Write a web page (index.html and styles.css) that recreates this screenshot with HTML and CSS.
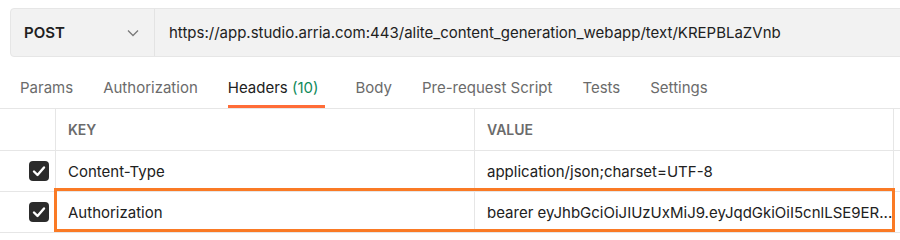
FILE: index.html
```html
<!DOCTYPE html>
<html>
<head>
<meta charset="utf-8">
<link rel="stylesheet" href="styles.css">
</head>
<body>
<div class="page">
  <div class="urlbar">
    <div class="method">
      <span class="method-name">POST</span>
      <svg class="chev" width="12" height="8" viewBox="0 0 12 8"><polyline points="1,1.5 6,6.5 11,1.5" fill="none" stroke="#7a7a7a" stroke-width="1.3"/></svg>
    </div>
    <div class="url">https://app.studio.arria.com:443/alite_content_generation_webapp/text/KREPBLaZVnb</div>
  </div>

  <div class="tabs">
    <div class="tab">Params</div>
    <div class="tab">Authorization</div>
    <div class="tab active">Headers <span class="count">(10)</span></div>
    <div class="tab">Body</div>
    <div class="tab">Pre-request Script</div>
    <div class="tab">Tests</div>
    <div class="tab">Settings</div>
  </div>

  <div class="table">
    <div class="row head">
      <div class="cell c0"></div>
      <div class="cell th">KEY</div>
      <div class="cell th">VALUE</div>
      <div class="cell last"></div>
    </div>
    <div class="row">
      <div class="cell c0"><span class="cb"><svg width="14" height="12" viewBox="0 0 14 12"><polyline points="2,6.5 5.5,10 12,2.5" fill="none" stroke="#fff" stroke-width="2.4" stroke-linecap="round" stroke-linejoin="round"/></svg></span></div>
      <div class="cell">Content-Type</div>
      <div class="cell">application/json;charset=UTF-8</div>
      <div class="cell last"></div>
    </div>
    <div class="row">
      <div class="cell c0"><span class="cb"><svg width="14" height="12" viewBox="0 0 14 12"><polyline points="2,6.5 5.5,10 12,2.5" fill="none" stroke="#fff" stroke-width="2.4" stroke-linecap="round" stroke-linejoin="round"/></svg></span></div>
      <div class="cell">Authorization</div>
      <div class="cell">bearer eyJhbGciOiJIUzUxMiJ9.eyJqdGkiOiI5cnlLSE9ER...</div>
      <div class="cell last"></div>
    </div>
    <div class="highlight"></div>
  </div>
</div>
</body>
</html>
```

FILE: styles.css
```css
html, body {
  margin: 0;
  padding: 0;
  background: #fff;
  overflow: hidden;
}
body {
  font-family: Inter, "Noto Sans", sans-serif;
  font-size: 15px;
  color: #212121;
  width: 900px;
  height: 240px;
}
.page {
  padding-top: 8px;
}
.urlbar {
  margin-left: 10px;
  width: 920px;
  height: 49px;
  box-sizing: border-box;
  display: flex;
  background: #f2f2f2;
  border: 1px solid #e6e6e6;
  border-radius: 4px;
}
.method {
  width: 144px;
  box-sizing: border-box;
  border-right: 1px solid #e3e3e3;
  display: flex;
  align-items: center;
  justify-content: space-between;
  padding: 0 15px 0 13px;
}
.method-name {
  font-weight: 600;
  font-size: 15px;
  color: #212121;
}
.chev {
  display: block;
}
.url {
  display: flex;
  align-items: center;
  padding-left: 14px;
  color: #212121;
  white-space: nowrap;
}
.tabs {
  display: flex;
  gap: 30px;
  padding: 21px 0 0 20px;
  border-bottom: 1px solid #e6e6e6;
}
.tab {
  line-height: 20px;
  padding-bottom: 7px;
  border-bottom: 3px solid transparent;
  color: #6b6b6b;
  white-space: nowrap;
}
.tab.active {
  color: #212121;
  border-bottom-color: #ff6c37;
  padding-right: 7px;
}
.count {
  color: #0f8a5a;
}
.table {
  position: relative;
}
.row {
  display: grid;
  grid-template-columns: 56px 419px 419px 1fr;
  height: 40px;
  border-bottom: 1px solid #e6e6e6;
}
.row.head {
  height: 41px;
}
.cell {
  border-right: 1px solid #e6e6e6;
  display: flex;
  align-items: center;
  padding-left: 12px;
  white-space: nowrap;
  overflow: hidden;
}
.cell.last {
  border-right: none;
}
.cell.c0 {
  padding: 0 6px 0 0;
  justify-content: flex-end;
}
.th {
  font-size: 14px;
  font-weight: 600;
  color: #6b6b6b;
}
.cb {
  width: 20px;
  height: 20px;
  border-radius: 4px;
  background: #2b2b2b;
  display: flex;
  align-items: center;
  justify-content: center;
}
.highlight {
  position: absolute;
  left: 54px;
  top: 79px;
  width: 841px;
  height: 44px;
  box-sizing: border-box;
  border: 3px solid #fa7a25;
  pointer-events: none;
}
```
